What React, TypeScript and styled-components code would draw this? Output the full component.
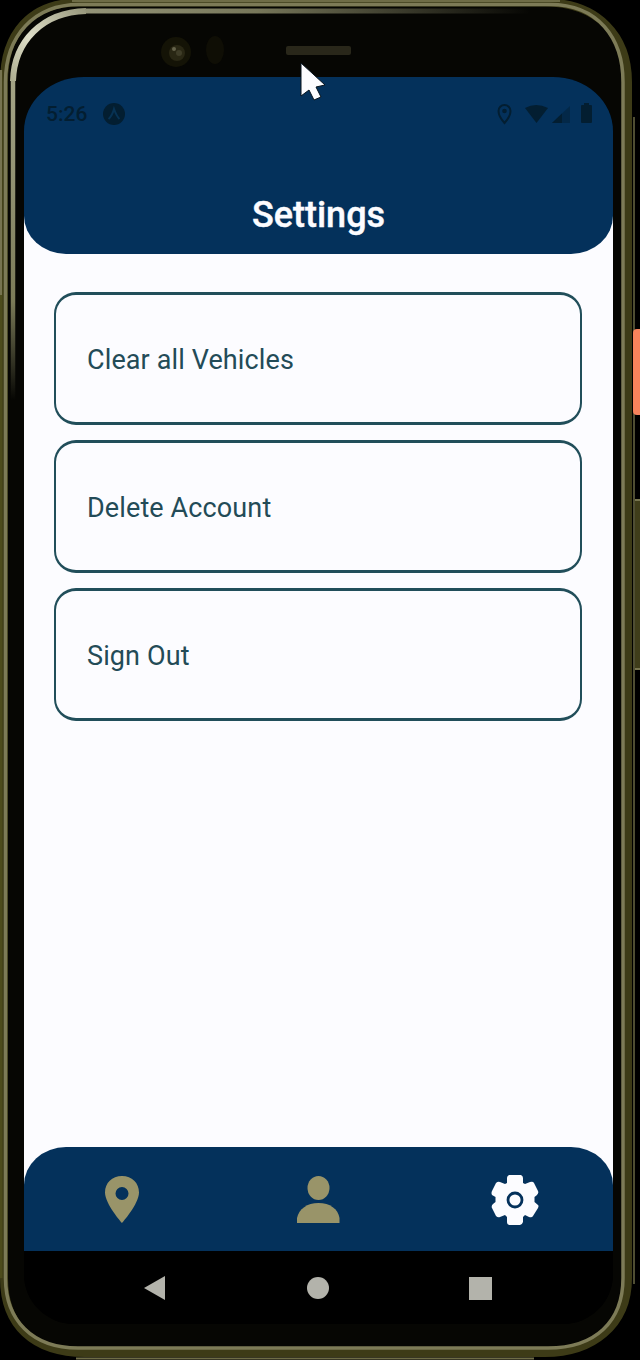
import React from "react";
import styled, { createGlobalStyle } from "styled-components";

const NAVY = "#04315b";
const TAN = "#999469";

const GlobalStyle = createGlobalStyle`
  * { box-sizing: border-box; }
  body { margin: 0; background: #000; font-family: Roboto, "Noto Sans", sans-serif; }
`;

const Device = styled.main`
  position: relative;
  width: 640px;
  height: 1360px;
  padding: 77px 27px 36px 24px;
  background: #000;
  overflow: hidden;
`;

const Overlay = styled.svg`
  position: absolute;
  inset: 0;
  pointer-events: none;
`;

const Screen = styled.div`
  position: relative;
  display: flex;
  flex-direction: column;
  width: 589px;
  height: 1247px;
  background: linear-gradient(#000 100px, #fcfcff 100px, #fcfcff 1150px, #000 1150px);
  border-radius: 60px 60px 50px 50px / 54px 54px 50px 50px;
  overflow: hidden;
`;

const Header = styled.header`
  display: flex;
  flex-direction: column;
  height: 177px;
  background: ${NAVY};
  border-radius: 0 0 42px 42px / 0 0 38px 38px;
`;

const StatusBar = styled.div`
  display: flex;
  align-items: center;
  justify-content: space-between;
  height: 74px;
  padding: 0 20px 0 22px;
  color: #031e31;
`;

const StatusGroup = styled.div`
  display: flex;
  align-items: center;
  gap: 16px;
`;

const Clock = styled.span`
  font-size: 21px;
  font-weight: 500;
  line-height: 24px;
`;

const Title = styled.h1`
  margin: 40px 0 0;
  font-size: 36px;
  font-weight: 500;
  line-height: 48px;
  text-align: center;
  color: #fcfcff;
  -webkit-text-stroke: 0.4px #fcfcff;
`;

const Content = styled.section`
  display: flex;
  flex: 1;
  flex-direction: column;
  gap: 15px;
  padding: 38px 31px 0 30px;
`;

const Option = styled.button`
  display: flex;
  align-items: center;
  height: 133px;
  padding: 3px 31px 0 31px;
  border: 2px solid #214e5a;
  border-top-width: 3px;
  border-bottom-width: 3px;
  border-radius: 22px;
  background: #fcfcff;
  color: #234b57;
  font: 400 27px/36px Roboto, "Noto Sans", sans-serif;
  letter-spacing: 0.12px;
  text-align: left;
`;

const TabBar = styled.nav`
  display: grid;
  grid-template-columns: repeat(3, 1fr);
  height: 104px;
  background: ${NAVY};
  border-radius: 42px 42px 0 0 / 38px 38px 0 0;
`;

const Tab = styled.div<{ $active?: boolean }>`
  display: flex;
  align-items: center;
  justify-content: center;
  padding-top: 1px;
  color: ${({ $active }) => ($active ? "#fcfcff" : TAN)};
`;

const SystemNav = styled.div`
  display: flex;
  align-items: center;
  justify-content: space-between;
  height: 73px;
  padding: 1px 121px 0 119px;
  background: #000;
  color: #b3b3ab;
`;

const options = ["Clear all Vehicles", "Delete Account", "Sign Out"];

function Frame() {
  return (
    <Overlay width="640" height="1360" viewBox="0 0 640 1360" fill="none">
      <defs>
        <linearGradient id="shine" x1="0" y1="70" x2="0" y2="400" gradientUnits="userSpaceOnUse">
          <stop offset="0" stopColor="#a7a789" />
          <stop offset=".7" stopColor="#7b7b58" />
          <stop offset="1" stopColor="#7b7b58" stopOpacity="0" />
        </linearGradient>
        <linearGradient id="topShine" x1="75" y1="0" x2="530" y2="0" gradientUnits="userSpaceOnUse">
          <stop offset="0" stopColor="#96967a" />
          <stop offset=".4" stopColor="#77775a" />
          <stop offset="1" stopColor="#77775a" stopOpacity="0" />
        </linearGradient>
        <linearGradient id="cornerShine" x1="13" y1="90" x2="90" y2="12" gradientUnits="userSpaceOnUse">
          <stop offset="0" stopColor="#a7a789" />
          <stop offset=".45" stopColor="#dedec8" />
          <stop offset="1" stopColor="#96967a" />
        </linearGradient>
      </defs>
      <path
        d="M79 2.500H545C598 2.500 628 36 628 82V1278C628 1326 592 1353 545 1353H85C33 1353 4 1325 4 1278V82C4 34 30 2.500 79 2.500Z"
        fill="#060603"
        stroke="#3d3b17"
        strokeWidth="8"
      />
      <path d="M1 70V1278" stroke="#4c4b1b" strokeWidth="3" />
      <path d="M1 70V295" stroke="#777450" strokeWidth="2" />
      <path
        d="M79 4.500H550C598 4.500 623 38 623 82V1278C623 1322 595 1348 548 1348H78C32 1348 5.500 1320 5.500 1278V82C5.500 36 34 4.500 79 4.500Z"
        stroke="#7d7b57"
        strokeWidth="3.500"
      />
      <path d="M72 1H560M76 1358.500H534" stroke="#6e6c46" strokeWidth="2" />
      <path d="M13 80V400" stroke="url(#shine)" strokeWidth="4.500" />
      <path d="M13 81C14 42 42 12 86 11" stroke="url(#cornerShine)" strokeWidth="6" />
      <path d="M86 11H530L530 11.1" stroke="url(#topShine)" strokeWidth="5" />
      <path d="M634 117V1284" stroke="#6a6844" strokeWidth="1.5" />
      <rect x="633" y="329" width="10" height="86" rx="4" fill="#f7835c" />
      <path d="M635 500H640V669H635Z" fill="#3f3d1a" />
      <path d="M635 500H640M635 669H640" stroke="#77754f" strokeWidth="2" />
      <circle cx="176" cy="52" r="15" fill="#141306" />
      <circle cx="177" cy="53" r="8" fill="#292714" />
      <circle cx="174" cy="49" r="2" fill="#65634b" />
      <circle cx="179" cy="53" r="3" fill="#3f3d28" />
      <ellipse cx="215" cy="50" rx="9" ry="14" fill="#0f0e05" />
      <rect x="286" y="46" width="65" height="9" rx="2" fill="#29271a" />
    </Overlay>
  );
}

function StatusIcons() {
  return (
    <svg width="98" height="24" viewBox="0 0 98 24" fill="currentColor">
      <path d="M9.500 21C5 16 3.500 12 3.500 9a6 6 0 0 1 12 0c0 3-1.500 7-6 12Z" fill="none" stroke="currentColor" strokeWidth="2" />
      <circle cx="9.500" cy="9" r="2.3" />
      <path d="M30 6Q41 0 53 6L41.500 21Z" />
      <path d="M57 21L75 4V21Z" opacity=".45" />
      <path d="M57 21L67 11.500V21Z" />
      <path d="M87 3h2V1h5v2h2q1 0 1 1v16q0 1-1 1h-9q-1 0-1-1V4q0-1 1-1Z" />
    </svg>
  );
}

export default function App() {
  return (
    <>
      <GlobalStyle />
      <Device>
        <Frame />
        <Screen>
          <Header>
            <StatusBar>
              <StatusGroup>
                <Clock>5:26</Clock>
                <svg width="23" height="24" viewBox="0 0 23 24">
                  <circle cx="11" cy="12" r="11" fill="currentColor" />
                  <path d="M5.500 17Q9 14 11 7Q13.500 14 16.500 17" fill="none" stroke="#073253" strokeWidth="2" />
                </svg>
              </StatusGroup>
              <StatusIcons />
            </StatusBar>
            <Title>Settings</Title>
          </Header>
          <Content>
            {options.map((label) => (
              <Option key={label}>{label}</Option>
            ))}
          </Content>
          <TabBar>
            <Tab>
              <svg width="34" height="47" viewBox="0 0 34 47" fill="currentColor">
                <path fillRule="evenodd" d="M17 0C7 0 0 7 0 16.500C0 28 17 47 17 47S34 28 34 16.500C34 7 27 0 17 0ZM17 11a6.500 6.500 0 1 1 0 13a6.500 6.500 0 0 1 0-13Z" />
              </svg>
            </Tab>
            <Tab>
              <svg width="44" height="47" viewBox="0 0 44 47" fill="currentColor">
                <ellipse cx="22.500" cy="12" rx="11" ry="12" />
                <path d="M1 47V42C3 33 11 27 22.500 27S42 33 43.500 42V47Z" />
              </svg>
            </Tab>
            <Tab $active>
              <svg width="48" height="50" viewBox="0 0 48 50" fill="currentColor">
                <path d="M18 0H30Q32 1 32 3V8L34 9L39 7Q42 6 43 8L47 16Q48 18 46 20L43.500 22V27L47 30Q48 31 47 33L42 41Q41 43 38 42L34 40L32 42V47Q31 50 29 50H19Q16 50 16 47V42L14 40L9 42Q7 43 5 41L1 33Q0 31 2 29L4.500 27V22L1 20Q0 18 1 16L5 8Q7 6 9 7L14 9L16 8V3Q16 1 18 0Z" />
                <circle cx="24" cy="25" r="7" fill="none" stroke={NAVY} strokeWidth="2.800" />
              </svg>
            </Tab>
          </TabBar>
          <SystemNav>
            <svg width="23" height="26" viewBox="0 0 23 26" fill="currentColor"><path d="M1 13L22 1V25Z" /></svg>
            <svg width="22" height="22" viewBox="0 0 22 22" fill="currentColor"><circle cx="11" cy="11" r="11" /></svg>
            <svg width="23" height="23" viewBox="0 0 23 23" fill="currentColor"><path d="M0 0H23V23H0Z" /></svg>
          </SystemNav>
        </Screen>
        <Overlay width="640" height="1360" viewBox="0 0 640 1360">
          <path d="M301 63L325 85L316 87L321 97L314 100L309 90L301 96Z" fill="#fcfcff" stroke="#06131e" strokeWidth="1" />
        </Overlay>
      </Device>
    </>
  );
}
